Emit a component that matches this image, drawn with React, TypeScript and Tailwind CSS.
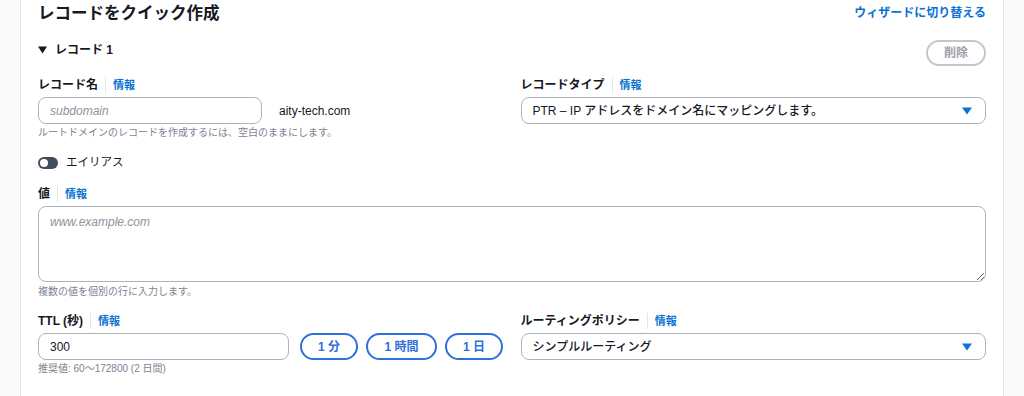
import React from "react"

const font = { fontFamily: '"Liberation Sans", "Noto Sans CJK JP", sans-serif' }

function Label({ text }: { text: string }) {
  return (
    <div className="flex items-center h-[18px] text-[12px] leading-[18px]">
      <span className="font-bold text-[#16191f]">{text}</span>
      <span className="mx-[7px] h-[16px] w-px bg-[#e3e5e8]" />
      <span className="font-bold text-[#0972d3] text-[11px]">情報</span>
    </div>
  )
}

function Caret() {
  return (
    <svg width="10" height="8" viewBox="0 0 10 8" className="shrink-0">
      <path d="M0 0.5h10L5 7.5z" fill="#0972d3" />
    </svg>
  )
}

function Select({ value }: { value: string }) {
  return (
    <div className="mt-[3px] flex h-[27px] items-center justify-between rounded-[8px] border border-[#aeb3ba] bg-white pl-[11px] pr-[13px] text-[12px] text-[#16191f]">
      <span className="font-medium">{value}</span>
      <Caret />
    </div>
  )
}

export default function App() {
  return (
    <div className="flex h-[396px] w-[1024px] bg-[#fafafa] overflow-hidden" style={font}>
      <div className="w-[20px] shrink-0" />
      <div className="w-[984px] shrink-0 border-x border-[#e3e5e8] bg-white px-[17px]">
        {/* Header */}
        <div className="flex h-[26px] items-center justify-between">
          <h1 className="text-[16.5px] font-bold text-[#16191f]">レコードをクイック作成</h1>
          <a className="text-[12px] font-bold text-[#0972d3]">ウィザードに切り替える</a>
        </div>

        {/* Record 1 */}
        <div className="mt-[12px] flex items-start justify-between">
          <div className="mt-[2px] flex h-[20px] items-center gap-[8px] text-[12px] font-bold text-[#16191f]">
            <svg width="9" height="8" viewBox="0 0 9 8">
              <path d="M0 0.5h9L4.5 7.5z" fill="#16191f" />
            </svg>
            <span>レコード 1</span>
          </div>
          <button className="mt-[2px] h-[26px] w-[60px] rounded-full border-2 border-[#c6c6cd] text-[12px] font-bold text-[#9ba0a8]">
            削除
          </button>
        </div>

        {/* Name / type */}
        <div className="mt-[10px] grid grid-cols-2 gap-x-[17px]">
          <div>
            <Label text="レコード名" />
            <div className="mt-[3px] flex items-center">
              <div className="flex h-[27px] w-[224px] items-center rounded-[8px] border border-[#aeb3ba] px-[11px] text-[12px] italic text-[#8d939b]">
                subdomain
              </div>
              <span className="ml-[17px] text-[12px] text-[#16191f]">aity-tech.com</span>
            </div>
            <p className="mt-[1px] text-[10px] leading-[16px] text-[#7d8390]">
              ルートドメインのレコードを作成するには、空白のままにします。
            </p>
          </div>
          <div>
            <Label text="レコードタイプ" />
            <Select value="PTR – IP アドレスをドメイン名にマッピングします。" />
          </div>
        </div>

        {/* Alias */}
        <div className="mt-[14px] flex h-[16px] items-center gap-[8px]">
          <div className="flex h-[12px] w-[20px] items-center rounded-full bg-[#414d5c] px-[2px]">
            <div className="h-[8px] w-[8px] rounded-full bg-white" />
          </div>
          <span className="text-[11.5px] text-[#16191f]">エイリアス</span>
        </div>

        {/* Value */}
        <div className="mt-[14px]">
          <Label text="値" />
          <textarea
            readOnly
            placeholder="www.example.com"
            className="mt-[3px] block h-[76px] w-full rounded-[8px] border border-[#aeb3ba] px-[11px] py-[6px] text-[12px] placeholder:italic placeholder:text-[#8d939b] outline-none"
          />
          <p className="mt-[2px] text-[10px] leading-[16px] text-[#7d8390]">複数の値を個別の行に入力します。</p>
        </div>

        {/* TTL / routing */}
        <div className="mt-[12px] grid grid-cols-2 gap-x-[17px]">
          <div>
            <Label text="TTL (秒)" />
            <div className="mt-[3px] flex items-center">
              <div className="flex h-[27px] w-[251px] items-center rounded-[8px] border border-[#aeb3ba] px-[11px] text-[12px] font-medium text-[#16191f]">
                300
              </div>
              <div className="ml-[11px] flex gap-[8px]">
                <button className="h-[27px] w-[58px] rounded-full border-2 border-[#2f6fdb] text-[12px] font-bold text-[#2f6fdb]">1 分</button>
                <button className="h-[27px] w-[71px] rounded-full border-2 border-[#2f6fdb] text-[12px] font-bold text-[#2f6fdb]">1 時間</button>
                <button className="h-[27px] w-[58px] rounded-full border-2 border-[#2f6fdb] text-[12px] font-bold text-[#2f6fdb]">1 日</button>
              </div>
            </div>
            <p className="mt-[1px] text-[10px] leading-[16px] text-[#7d8390]">推奨値: 60〜172800 (2 日間)</p>
          </div>
          <div>
            <Label text="ルーティングポリシー" />
            <Select value="シンプルルーティング" />
          </div>
        </div>
      </div>
      <div className="flex-1" />
    </div>
  )
}
